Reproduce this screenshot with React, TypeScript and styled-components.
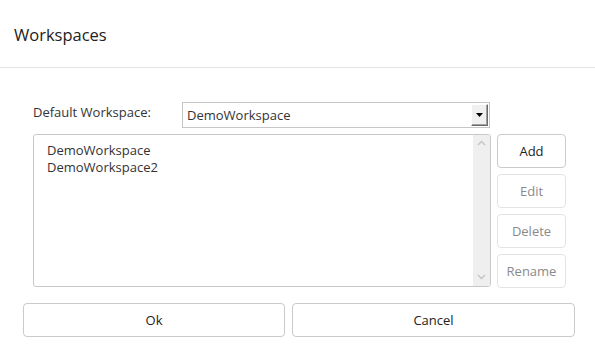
import React from 'react'
import styled, { createGlobalStyle } from 'styled-components'

const GlobalStyle = createGlobalStyle`
  html, body {
    margin: 0;
    padding: 0;
    background: #fff;
  }
  body {
    font-family: 'Open Sans', 'Noto Sans', sans-serif;
    color: #333;
  }
`

const Dialog = styled.div`
  width: 595px;
  height: 358px;
  background: #fff;
  display: flex;
  flex-direction: column;
`

const Header = styled.div`
  height: 68px;
  box-sizing: border-box;
  border-bottom: 1px solid #e2e2e2;
  display: flex;
  align-items: center;
  padding-left: 14px;
  padding-top: 2px;
`

const Title = styled.h1`
  margin: 0;
  font-size: 16.5px;
  font-weight: 400;
  color: #222;
`

const Body = styled.div`
  padding: 34px 0 0 33px;
  display: flex;
  flex-direction: column;
`

const FieldRow = styled.div`
  display: flex;
  align-items: center;
  height: 26px;
`

const Label = styled.label`
  width: 149px;
  font-size: 13px;
  color: #333;
  margin-top: -6px;
`

const Select = styled.div`
  width: 308px;
  height: 26px;
  box-sizing: border-box;
  border: 1px solid #c6c6c6;
  display: flex;
  align-items: center;
  padding: 1px 1px 1px 4px;
  font-size: 13px;
  color: #333;
`

const SelectValue = styled.span`
  flex: 1;
`

const DropButton = styled.div`
  width: 17px;
  height: 22px;
  box-sizing: border-box;
  background: #f0f0f0;
  border-top: 1px solid #fff;
  border-left: 1px solid #fff;
  border-right: 1px solid #6a6a6a;
  border-bottom: 1px solid #6a6a6a;
  box-shadow: inset -1px -1px 0 #a0a0a0;
  display: flex;
  align-items: center;
  justify-content: center;
`

const ListRow = styled.div`
  display: flex;
  gap: 6px;
  margin-top: 6px;
`

const ListBox = styled.div`
  width: 458px;
  height: 153px;
  box-sizing: border-box;
  border: 1px solid #c8c8c8;
  border-radius: 3px;
  display: flex;
  overflow: hidden;
`

const Items = styled.ul`
  flex: 1;
  list-style: none;
  margin: 0;
  padding: 7px 0 0 13px;
  font-size: 13px;
  line-height: 17px;
  color: #333;
`

const ScrollTrack = styled.div`
  width: 17px;
  background: #efefef;
  display: flex;
  flex-direction: column;
  justify-content: space-between;
  align-items: center;
  padding: 5px 0 6px;
`

const SideButtons = styled.div`
  display: flex;
  flex-direction: column;
  gap: 6px;
`

const Button = styled.button<{ $disabled?: boolean; $width?: number }>`
  width: ${p => p.$width ?? 69}px;
  height: 34px;
  box-sizing: border-box;
  border: 1px solid ${p => (p.$disabled ? '#e3e3e3' : '#cacaca')};
  border-radius: 4px;
  background: #fff;
  font-family: 'Open Sans', 'Noto Sans', sans-serif;
  font-size: 13px;
  color: ${p => (p.$disabled ? '#8a8a8a' : '#222')};
  padding: 0;
  cursor: ${p => (p.$disabled ? 'default' : 'pointer')};
`

const Footer = styled.div`
  display: flex;
  gap: 7px;
  padding: 15px 0 0 23px;
`

const Chevron = ({ up }: { up?: boolean }) => (
  <svg width="9" height="6" viewBox="0 0 9 6">
    <path
      d={up ? 'M1 5 L4.5 1.5 L8 5' : 'M1 1 L4.5 4.5 L8 1'}
      fill="none"
      stroke="#c4c4c4"
      strokeWidth="1.4"
    />
  </svg>
)

export default function App() {
  const workspaces = ['DemoWorkspace', 'DemoWorkspace2']
  return (
    <>
      <GlobalStyle />
      <Dialog>
        <Header>
          <Title>Workspaces</Title>
        </Header>
        <Body>
          <FieldRow>
            <Label>Default Workspace:</Label>
            <Select>
              <SelectValue>DemoWorkspace</SelectValue>
              <DropButton>
                <svg width="7" height="4" viewBox="0 0 7 4">
                  <path d="M0 0 H7 L3.5 4 Z" fill="#000" />
                </svg>
              </DropButton>
            </Select>
          </FieldRow>
          <ListRow>
            <ListBox>
              <Items>
                {workspaces.map(w => (
                  <li key={w}>{w}</li>
                ))}
              </Items>
              <ScrollTrack>
                <Chevron up />
                <Chevron />
              </ScrollTrack>
            </ListBox>
            <SideButtons>
              <Button>Add</Button>
              <Button $disabled>Edit</Button>
              <Button $disabled>Delete</Button>
              <Button $disabled>Rename</Button>
            </SideButtons>
          </ListRow>
        </Body>
        <Footer>
          <Button $width={262}>Ok</Button>
          <Button $width={283}>Cancel</Button>
        </Footer>
      </Dialog>
    </>
  )
}
